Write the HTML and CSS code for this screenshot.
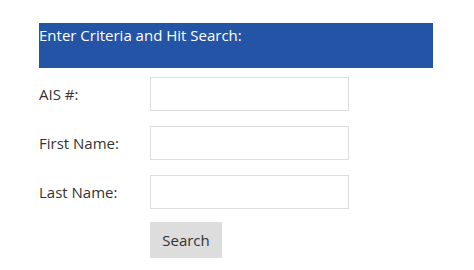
FILE: index.html
```html
<!DOCTYPE html>
<html>
  <head>
    <title>Search</title>
    <link rel="stylesheet" href="styles.css">
  </head>
  <body>
    <div class="search-panel">
      <div class="panel-header">Enter Criteria and Hit Search:</div>

      <div class="field-row">
        <label class="field-label">AIS #:</label>
        <input class="field-input" type="text">
      </div>

      <div class="field-row">
        <label class="field-label">First Name:</label>
        <input class="field-input" type="text">
      </div>

      <div class="field-row">
        <label class="field-label">Last Name:</label>
        <input class="field-input" type="text">
      </div>

      <div class="button-row">
        <button class="search-button">Search</button>
      </div>
    </div>
  </body>
</html>
```

FILE: styles.css
```css
body {
  margin: 0;
  background-color: white;
  font-family: "Open Sans", sans-serif;
  color: rgb(51, 51, 51);
}

.search-panel {
  width: 394px;
  margin-left: 39px;
  padding-top: 23px;
}

.panel-header {
  background-color: rgb(36, 84, 166);
  color: white;
  font-size: 15px;
  height: 45px;
  box-sizing: border-box;
  padding-top: 2px;
  line-height: 20px;
  margin-bottom: 9px;
}

.field-row {
  display: flex;
  align-items: center;
  margin-bottom: 15px;
}

.field-label {
  width: 111px;
  font-size: 15px;
}

.field-input {
  width: 199px;
  height: 34px;
  box-sizing: border-box;
  border: solid 1px rgb(221, 221, 221);
  margin: 0;
  padding: 4px 8px;
}

.button-row {
  padding-left: 111px;
  margin-top: -2px;
}

.search-button {
  width: 72px;
  height: 36px;
  background-color: rgb(221, 221, 221);
  border: none;
  color: rgb(51, 51, 51);
  font-family: "Open Sans", sans-serif;
  font-size: 15px;
  cursor: pointer;
}
```
